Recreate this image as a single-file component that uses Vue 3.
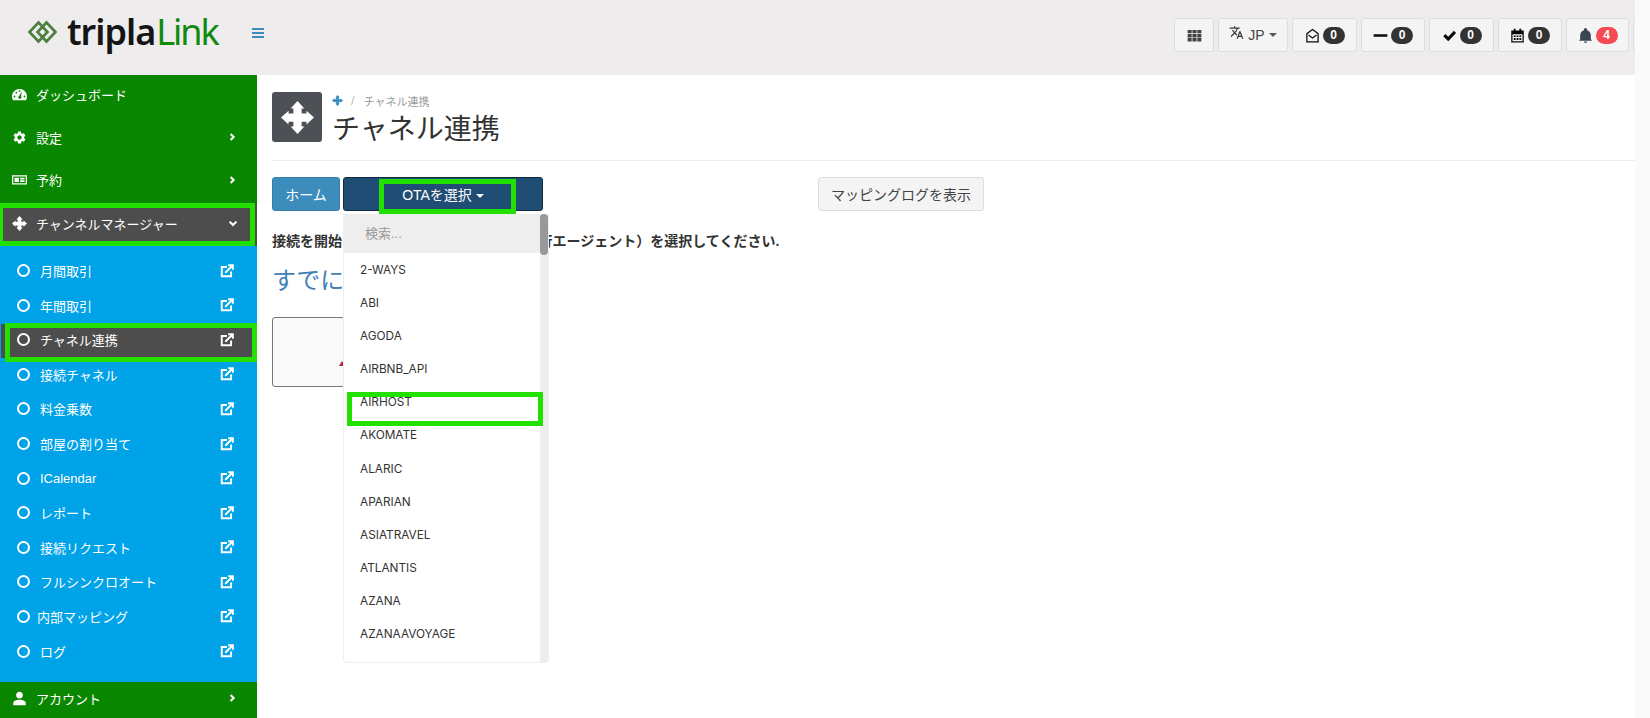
<script setup>
const icons = {
  move: 'M12 0L17 5.500H15V9H18.500V7L24 12L18.500 17V15H15V18.500H17L12 24L7 18.500H9V15H5.500V17L0 12L5.500 7V9H9V5.500H7Z',
  gear: 'M19.14 12.94c.04-.3.06-.61.06-.94 0-.32-.02-.64-.07-.94l2.03-1.58c.18-.14.23-.41.12-.61l-1.92-3.32c-.12-.22-.37-.29-.59-.22l-2.39.96c-.5-.38-1.03-.7-1.62-.94l-.36-2.54c-.04-.24-.24-.41-.48-.41h-3.84c-.24 0-.43.17-.47.41l-.36 2.54c-.59.24-1.13.57-1.62.94l-2.39-.96c-.22-.08-.47 0-.59.22L2.74 8.87c-.12.21-.08.47.12.61l2.03 1.58c-.05.3-.09.63-.09.94s.02.64.07.94l-2.03 1.58c-.18.14-.23.41-.12.61l1.92 3.32c.12.22.37.29.59.22l2.39-.96c.5.38 1.03.7 1.62.94l.36 2.54c.05.24.24.41.48.41h3.84c.24 0 .44-.17.47-.41l.36-2.54c.59-.24 1.13-.56 1.62-.94l2.39.96c.22.08.47 0 .59-.22l1.92-3.32c.12-.22.07-.47-.12-.61l-2.01-1.58zM12 15.6c-1.98 0-3.6-1.62-3.6-3.6s1.62-3.6 3.6-3.6 3.6 1.62 3.6 3.6-1.62 3.6-3.6 3.6z',
  gauge: 'M12 3C5.4 3 0 8.4 0 15c0 2.2.6 4.2 1.6 6h20.8c1-1.8 1.6-3.8 1.6-6 0-6.6-5.4-12-12-12zM4 16.500a1.500 1.500 0 1 1 0-3 1.500 1.500 0 0 1 0 3zm3-6a1.500 1.500 0 1 1 0-3 1.500 1.500 0 0 1 0 3zm5-2.500a1.500 1.500 0 1 1 0-3 1.500 1.500 0 0 1 0 3zm1.600 10.600a2.600 2.600 0 0 1-3.600-2.200c0-1 .6-1.800 1.400-2.200L15 8l.6.2-1 6.400c.8 1 .6 3-1 4zM20 16.500a1.500 1.500 0 1 1 0-3 1.500 1.500 0 0 1 0 3z',
  card: 'M0 5h24v15H0zM2 7v11h20V7zM4 9h7v7H4zm9 0h7v3h-7zm0 4h7v3h-7z',
  user: 'M12 12c3 0 5.400-2.400 5.400-5.400S15 1.200 12 1.200 6.600 3.600 6.600 6.600 9 12 12 12zm0 2c-4 0-10 1.600-10 5v3.800h20V19c0-3.400-6-5-10-5z',
  right: 'M8 3l9 9-9 9-3.500-3.500 5.500-5.500-5.500-5.500z',
  down: 'M2 8l10 10 10-10-3.500-3.500-6.500 6.500-6.500-6.500z',
  grid: 'M1 3h6.500v5.500H1zm7.700 0h6.600v5.500H8.700zm7.800 0H23v5.500h-6.500zM1 9.500h6.500V15H1zm7.700 0h6.600V15H8.700zm7.800 0H23V15h-6.500zM1 16h6.500v5.500H1zm7.700 0h6.600v5.500H8.700zm7.800 0H23v5.500h-6.500z',
  translate: 'M12.87 15.07l-2.54-2.51.03-.03c1.74-1.94 2.98-4.17 3.71-6.53H17V4h-7V2H8v2H1v1.99h11.17C11.5 7.92 10.4 9.75 9 11.3 8.09 10.29 7.34 9.18 6.75 8h-2c.73 1.63 1.73 3.17 2.98 4.56l-5.09 5.02L4 19l5-5 3.11 3.11.76-2.04zM18.5 10h-2L12 22h2l1.12-3h4.75L21 22h2l-4.500-12zm-2.620 7l1.620-4.330L19.120 17h-3.240z',
  envelope: 'M12 1L2 8.500V23h20V8.500zM4 9.500L12 3.500l8 6V21H4zM5 12l7 5 7-5-1-1.500-6 4.300-6-4.300z',
  minus: 'M1 10h22v4H1z',
  check: 'M2 13l3.500-3.500 4.500 4.500L19 4.500l3.500 3.500L10 21z',
  calendar: 'M6 1h3v3h6V1h3v3h4v19H2V4h4zM4 10v11h16V10zm2 2h3v2.500H6zm4.500 0h3v2.500h-3zm4.500 0h3v2.500h-3zM6 16h3v3H6zm4.500 0h3v3h-3zm4.500 0h3v3h-3z',
  bell: 'M12 24c1.400 0 2.500-1 2.500-2.300h-5C9.500 23 10.600 24 12 24zm8.500-6v-6.500c0-4-2.500-7.300-6-8.100V2.500a2.500 2.500 0 0 0-5 0v.900c-3.500.800-6 4.100-6 8.100V18L1.500 20.500h21z',
}
const topMenu = [
  { label: 'ダッシュボード', icon: 'gauge' },
  { label: '設定', icon: 'gear', arrow: 'right' },
  { label: '予約', icon: 'card', arrow: 'right' },
]
const subMenu = [
  { label: '月間取引' },
  { label: '年間取引' },
  { label: 'チャネル連携', active: true },
  { label: '接続チャネル' },
  { label: '料金乗数' },
  { label: '部屋の割り当て' },
  { label: 'ICalendar' },
  { label: 'レポート' },
  { label: '接続リクエスト' },
  { label: 'フルシンクロオート' },
  { label: '内部マッピング', tight: true },
  { label: 'ログ' },
]
const counters = [
  { icon: 'envelope', n: 0, w: 65 },
  { icon: 'minus', n: 0, w: 64 },
  { icon: 'check', n: 0, w: 65 },
  { icon: 'calendar', n: 0, w: 64 },
  { icon: 'bell', n: 4, w: 63, red: true },
]
const otas = ['2-WAYS', 'ABI', 'AGODA', 'AIRBNB_API', 'AIRHOST', 'AKOMATE', 'ALARIC', 'APARIAN', 'ASIATRAVEL', 'ATLANTIS', 'AZANA', 'AZANAAVOYAGE']
</script>

<template>
  <div class="page">
    <div class="col">
      <header class="top">
        <div class="brand">
          <svg class="logo" viewBox="0 0 30 24" fill="none" stroke="#4b7f3c" stroke-width="2.600">
            <path d="M11 2.500L20 12l-9 9.500L2 12z" />
            <path d="M19 2.500L28 12l-9 9.500L10 12z" />
          </svg>
          <span class="wm">tripla<em>Link</em></span>
        </div>
        <div class="burger"><i></i><i></i><i></i></div>
        <div class="tools">
          <button class="tool grid"><svg class="ti" viewBox="0 0 24 24"><path :d="icons.grid" fill="#444" /></svg></button>
          <button class="tool lang">
            <svg class="ti tr" viewBox="0 0 24 24"><path :d="icons.translate" fill="#333" /></svg>
            <span>JP</span><b class="caret dark"></b>
          </button>
          <button v-for="c in counters" :key="c.icon" class="tool count" :style="{ width: c.w + 'px' }">
            <svg class="ti" viewBox="0 0 24 24"><path :d="icons[c.icon]" :fill="c.icon === 'bell' ? '#3c4650' : '#0a0a0a'" fill-rule="evenodd" /></svg>
            <span class="pill" :class="{ red: c.red }">{{ c.n }}</span>
          </button>
          <button class="tool last"></button>
        </div>
      </header>

      <div class="body">
        <aside class="side">
          <a v-for="m in topMenu" :key="m.label" class="item">
            <svg class="mi" viewBox="0 0 24 24"><path :d="icons[m.icon]" fill="#fff" fill-rule="evenodd" /></svg>
            <span>{{ m.label }}</span>
            <svg v-if="m.arrow" class="ar" viewBox="0 0 24 24"><path :d="icons[m.arrow]" fill="#fff" /></svg>
          </a>
          <a class="item current">
            <svg class="mi" viewBox="0 0 24 24"><path :d="icons.move" fill="#fff" /></svg>
            <span>チャンネルマネージャー</span>
            <svg class="ar" viewBox="0 0 24 24"><path :d="icons.down" fill="#fff" /></svg>
            <i class="mark"></i>
          </a>
          <div class="subs">
            <a v-for="s in subMenu" :key="s.label" class="sub" :class="{ on: s.active }">
              <i class="ring"></i>
              <span :class="{ tight: s.tight }">{{ s.label }}</span>
              <svg class="ext" viewBox="0 0 24 24" fill="none" stroke="#fff" stroke-width="3.400">
                <path d="M12 5H3v16h16v-8" />
                <path d="M9 15L21 3M14 2h8v8" />
              </svg>
              <i v-if="s.active" class="mark"></i>
            </a>
          </div>
          <a class="item account">
            <svg class="mi" viewBox="0 0 24 24"><path :d="icons.user" fill="#fff" /></svg>
            <span>アカウント</span>
            <svg class="ar" viewBox="0 0 24 24"><path :d="icons.right" fill="#fff" /></svg>
          </a>
        </aside>

        <main class="main">
          <div class="head">
            <div class="hicon"><svg viewBox="0 0 24 24"><path :d="icons.move" fill="#fff" /></svg></div>
            <div>
              <div class="crumb">
                <svg viewBox="0 0 24 24"><path :d="icons.move" fill="#3c8dbc" /></svg>
                <i>/</i><span>チャネル連携</span>
              </div>
              <h1>チャネル連携</h1>
            </div>
          </div>

          <div class="actions">
            <button class="btn home">ホーム</button>
            <div class="dd">
              <button class="btn ota">OTAを選択<b class="caret"></b></button>
              <i class="mark otamark"></i>
              <div class="menu">
                <div class="list">
                  <div class="search">検索...</div>
                  <div class="opts">
                    <a v-for="o in otas" :key="o" class="opt">
                      {{ o }}
                      <i v-if="o === 'AIRHOST'" class="mark"></i>
                    </a>
                  </div>
                </div>
                <div class="track"><i></i></div>
              </div>
            </div>
            <button class="btn logbtn">マッピングログを表示</button>
          </div>

          <p class="lead">接続を開始するには、OTA（オンライン旅行エージェント）を選択してください.</p>
          <h2>すでに接続済み</h2>
          <div class="card"><span class="peek"></span></div>
        </main>
      </div>
    </div>
    <div class="gutter"></div>
  </div>
</template>

<style>
html, body { margin: 0; overflow: hidden; background: #fff; }
</style>

<style scoped>
.page {
  display: flex;
  width: 1650px;
  height: 718px;
  overflow: hidden;
  font-family: "Liberation Sans", "Noto Sans CJK JP", sans-serif;
  color: #333;
}
.col { width: 1635px; display: flex; flex-direction: column; flex: none; }
.gutter { width: 15px; flex: none; background: #fafafa; }

.top {
  height: 75px;
  flex: none;
  background: #eeeced;
  display: flex;
  align-items: flex-start;
  overflow: hidden;
}
.brand { width: 252px; flex: none; display: flex; align-items: center; padding: 15px 0 0 27px; box-sizing: border-box; height: 49px; }
.logo { width: 31px; height: 24px; margin-right: 9px; flex: none; }
.wm { font-family: "Noto Sans", sans-serif; font-weight: 600; font-size: 36px; color: #151515; letter-spacing: -1px; line-height: 40px; }
.wm em { font-style: normal; font-weight: 400; color: #118a0d; margin-left: 1px; letter-spacing: -2px; }
.burger { display: flex; flex-direction: column; gap: 2px; margin-top: 28px; width: 12px; }
.burger i { display: block; height: 2px; background: #3c8dbc; }
.tools { margin-left: auto; display: flex; gap: 4px; padding-top: 18px; margin-right: -12px; }
.tool {
  height: 34px;
  box-sizing: border-box;
  background: #f4f4f4;
  border: 1px solid #ddd;
  border-radius: 3px;
  display: flex;
  align-items: center;
  justify-content: center;
  padding: 0;
  flex: none;
  font-family: inherit;
}
.grid { width: 40px; }
.lang { width: 70px; gap: 4px; font-size: 14px; color: #444; }
.last { width: 14px; }
.ti { width: 15px; height: 15px; flex: none; }
.tr { width: 15px; height: 15px; margin-top: -5px; }
.count { gap: 3px; }
.pill {
  background: #333;
  color: #fff;
  font-size: 12px;
  font-weight: 700;
  height: 17px;
  line-height: 17px;
  width: 22px;
  border-radius: 9px;
  text-align: center;
}
.pill.red { background: #f64a52; }
.caret { display: inline-block; width: 0; height: 0; border: 4px solid transparent; border-top-color: #fff; border-bottom: 0; margin-left: 4px; vertical-align: middle; }
.caret.dark { border-top-color: #555; margin-left: 0; }

.body { flex: 1; display: flex; min-height: 0; }
.side { width: 257px; flex: none; background: #0a8700; display: flex; flex-direction: column; overflow: hidden; font-size: 13px; color: #fff; }
.item { height: 42.500px; flex: none; display: flex; align-items: center; padding: 0 19px 3px 12px; position: relative; box-sizing: border-box; }
.item span { margin-left: 9px; }
.mi { width: 15px; height: 15px; flex: none; }
.ar { width: 10px; height: 10px; margin-left: auto; }
.current { background: #4d4d4d; height: 43px; padding-bottom: 1px; }
.account { flex: 1; height: auto; }
.mark { position: absolute; border: 5px solid #22e000; box-sizing: border-box; pointer-events: none; }
.current .mark { left: -2px; right: 2px; top: 0; bottom: 0; }
.subs { background: #00a2e8; padding: 9px 0 12px; flex: none; }
.sub { height: 34.600px; display: flex; align-items: center; padding: 0 23px 2.500px 17px; position: relative; box-sizing: border-box; font-size: 13px; }
.ring { width: 13px; height: 13px; border: 2px solid #fff; border-radius: 50%; box-sizing: border-box; flex: none; margin-right: 10px; }
.tight { margin-left: -3px; }
.ext { width: 14px; height: 14px; margin-left: auto; }
.sub.on { background: #4d4d4d; margin-left: 1px; padding-left: 16px; }
.sub.on .mark { left: 4px; right: 0; top: -1px; bottom: -4px; }

.main { flex: 1; padding: 17px 0 0 15px; position: relative; min-width: 0; }
.head { display: flex; gap: 10px; padding-bottom: 13px; border-bottom: 1px solid #eee; }
.hicon { width: 50px; height: 50px; background: #4d5055; border-radius: 3px; display: flex; align-items: center; justify-content: center; flex: none; }
.hicon svg { width: 33px; height: 33px; }
.crumb { display: flex; align-items: center; height: 17px; font-size: 11px; color: #999; }
.crumb svg { width: 11px; height: 11px; }
.crumb i { font-style: normal; margin: 0 9px 0 8px; color: #bbb; font-size: 13px; }
h1 { margin: 4px 0 0; font-size: 28px; font-weight: 400; line-height: 34px; color: #333; }
.actions { display: flex; align-items: flex-start; margin-top: 16px; }
.btn { height: 34px; box-sizing: border-box; border-radius: 3px; font-family: inherit; font-size: 14px; padding: 0; border: 1px solid transparent; }
.home { width: 68px; background: #3c8dbc; border-color: #367fa9; color: #fff; }
.dd { position: relative; margin-left: 3px; width: 200px; }
.ota { width: 200px; background: #204d74; border-color: #122b40; color: #fff; }
.otamark { left: 36px; top: 2px; width: 137px; height: 35px; }
.menu { position: absolute; left: 0; top: 37px; width: 206px; height: 449px; background: #fff; z-index: 3; border: 1px solid #eee; border-top: 0; border-radius: 0 0 4px 4px; box-sizing: border-box; display: flex; overflow: hidden; }
.list { flex: 1; min-width: 0; }
.search { height: 39px; background: #eee; color: #999; font-size: 13px; line-height: 39px; padding-left: 21px; }
.opts { padding-top: 1px; }
.opt { display: block; height: 33.100px; line-height: 33.100px; padding-left: 16px; font-family: Inter, sans-serif; font-size: 11.800px; color: #333; position: relative; }
.opt .mark { left: 3px; right: -3px; top: 5.500px; height: 34px; }
.track { width: 8px; background: #eee; flex: none; }
.track i { display: block; height: 41px; background: #999; border-radius: 4px; }
.logbtn { width: 166px; margin-left: 275px; background: #f4f4f4; border-color: #ddd; color: #444; }
.lead { margin: 20px 0 0; font-size: 14px; font-weight: 700; line-height: 20px; color: #333; }
h2 { margin: 15px 0 0; font-size: 24px; font-weight: 400; line-height: 30px; color: #4080b5; }
.card { width: 260px; height: 70px; margin-top: 21px; box-sizing: border-box; border: 1px solid #777; border-radius: 3px; background: #fafafa; position: relative; }
.peek { position: absolute; left: 66px; top: 40px; border: 3px solid transparent; border-bottom: 5px solid #c0233c; }
</style>
